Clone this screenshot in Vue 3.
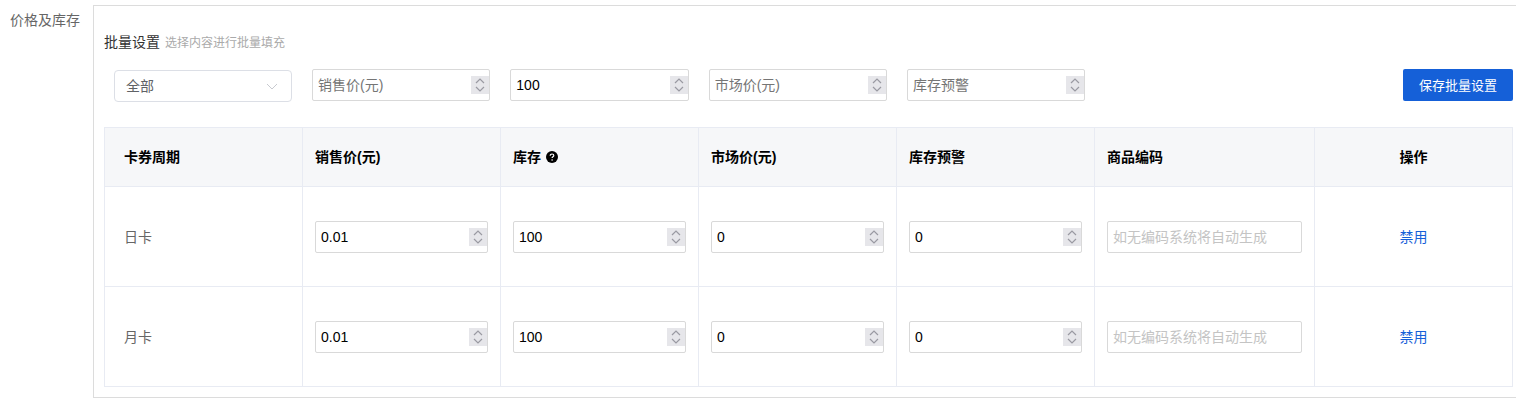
<script setup>
const batchFields = [
  { key: 'price', placeholder: '销售价(元)', value: '' },
  { key: 'stock', placeholder: '库存', value: '100' },
  { key: 'market', placeholder: '市场价(元)', value: '' },
  { key: 'warn', placeholder: '库存预警', value: '' }
]

const rows = [
  { name: '日卡', cells: ['0.01', '100', '0', '0'] },
  { name: '月卡', cells: ['0.01', '100', '0', '0'] }
]
</script>

<template>
  <div class="page">
    <div class="side-label">价格及库存</div>
    <div class="panel">
      <div class="batch-title">
        <span class="batch-name">批量设置</span>
        <span class="batch-tip">选择内容进行批量填充</span>
      </div>

      <div class="batch-bar">
        <div class="select">
          <span>全部</span>
          <svg class="arrow" width="12" height="7" viewBox="0 0 12 7">
            <path d="M1 1l5 5 5-5" fill="none" stroke="#c8cad0" stroke-width="1" />
          </svg>
        </div>
        <div v-for="f in batchFields" :key="f.key" class="num-wrap batch-num">
          <input class="num" type="number" :placeholder="f.placeholder" :value="f.value" />
          <span class="spin">
            <svg width="10" height="14" viewBox="0 0 10 14">
              <path d="M1 5l4-4 4 4M1 9l4 4 4-4" fill="none" stroke="#9a9aa2" stroke-width="1.2" />
            </svg>
          </span>
        </div>
        <button class="save-btn" type="button">保存批量设置</button>
      </div>

      <table class="sku-table">
        <colgroup>
          <col class="c-std" />
          <col class="c-std" />
          <col class="c-std" />
          <col class="c-std" />
          <col class="c-std" />
          <col class="c-code" />
          <col />
        </colgroup>
        <thead>
          <tr>
            <th class="first">卡券周期</th>
            <th>销售价(元)</th>
            <th>
              <span class="th-help">
                库存
                <svg width="12" height="12" viewBox="0 0 12 12">
                  <circle cx="6" cy="6" r="6" fill="#000" />
                  <path d="M4.2 4.7c0-1.1.8-1.7 1.8-1.7s1.8.6 1.8 1.5c0 1.3-1.7 1.3-1.7 2.6" fill="none" stroke="#fff" stroke-width="1.2" />
                  <circle cx="6.1" cy="9" r=".8" fill="#fff" />
                </svg>
              </span>
            </th>
            <th>市场价(元)</th>
            <th>库存预警</th>
            <th>商品编码</th>
            <th class="center">操作</th>
          </tr>
        </thead>
        <tbody>
          <tr v-for="row in rows" :key="row.name">
            <td class="first name">{{ row.name }}</td>
            <td v-for="(val, i) in row.cells" :key="i">
              <div class="num-wrap">
                <input class="num" type="number" :value="val" />
                <span class="spin">
                  <svg width="10" height="14" viewBox="0 0 10 14">
                    <path d="M1 5l4-4 4 4M1 9l4 4 4-4" fill="none" stroke="#9a9aa2" stroke-width="1.2" />
                  </svg>
                </span>
              </div>
            </td>
            <td><input class="code" type="text" placeholder="如无编码系统将自动生成" /></td>
            <td class="center action"><a class="link">禁用</a></td>
          </tr>
        </tbody>
      </table>
    </div>
  </div>
</template>

<style scoped>
.page {
  display: flex;
  align-items: flex-start;
  padding-top: 5px;
  font-family: "Liberation Sans", "Noto Sans CJK SC", sans-serif;
  color: #333;
}

.side-label {
  width: 93px;
  flex: none;
  box-sizing: border-box;
  padding: 5px 0 0 10px;
  font-size: 14px;
  line-height: 20px;
  color: #666;
}

.panel {
  flex: 1;
  min-width: 0;
  box-sizing: border-box;
  height: 393px;
  padding: 26px 3px 0 10px;
  border: 1px solid #dcdcdc;
  border-right: none;
}

.batch-title {
  display: flex;
  align-items: baseline;
  height: 20px;
  line-height: 20px;
}

.batch-name {
  font-size: 14px;
  color: #333;
}

.batch-tip {
  margin-left: 5px;
  font-size: 12px;
  color: #aaa;
}

.batch-bar {
  display: flex;
  align-items: flex-start;
  margin-top: 17px;
  padding-left: 10px;
}

.select {
  display: flex;
  align-items: center;
  justify-content: space-between;
  box-sizing: border-box;
  width: 178px;
  height: 32px;
  margin-top: 1px;
  padding: 0 12px 2px 11px;
  border: 1px solid #dcdfe6;
  border-radius: 4px;
  font-size: 14px;
  color: #606266;
}

.arrow {
  margin-top: 2px;
  margin-right: 1px;
}

.num-wrap {
  position: relative;
  width: 173px;
  height: 32px;
}

.batch-num {
  width: 178.33px;
  margin-left: 20px;
}

.num {
  display: block;
  box-sizing: border-box;
  width: 100%;
  height: 32px;
  padding: 0 20px 0 5px;
  border: 1px solid #d9d9d9;
  border-radius: 2px;
  outline: none;
  background: #fff;
  font-family: inherit;
  font-size: 14px;
  color: #000;
  appearance: textfield;
}

.num::-webkit-inner-spin-button,
.num::-webkit-outer-spin-button {
  -webkit-appearance: none;
  margin: 0;
}

.num::placeholder {
  color: #757575;
}

/* 数字框右侧的步进按钮 */
.spin {
  position: absolute;
  top: 7px;
  right: 1px;
  display: flex;
  align-items: center;
  justify-content: center;
  width: 18px;
  height: 18px;
  background: #e6e6ea;
  pointer-events: none;
}

.save-btn {
  box-sizing: border-box;
  width: 110px;
  height: 32px;
  margin-left: auto;
  padding: 0 0 2px;
  border: none;
  border-radius: 2px;
  background: #1560d8;
  font-family: inherit;
  font-size: 13px;
  color: #fff;
}

.sku-table {
  width: 1409px;
  margin-top: 25px;
  border-collapse: collapse;
  table-layout: fixed;
}

.c-std {
  width: 198px;
}

.c-code {
  width: 220px;
}

.sku-table th,
.sku-table td {
  box-sizing: border-box;
  padding: 0 12px;
  border: 1px solid #e8ebf3;
  text-align: left;
  font-size: 14px;
}

.sku-table th {
  height: 59px;
  padding-bottom: 2px;
  background: #f6f7f9;
  font-weight: 700;
  color: #000;
}

.sku-table td {
  height: 100px;
}

.sku-table .first {
  padding-left: 19px;
}

.sku-table .center {
  text-align: center;
}

.sku-table .name,
.sku-table .action {
  padding-bottom: 2px;
}

.name {
  color: #666;
}

.th-help {
  display: inline-flex;
  align-items: center;
  gap: 5px;
}

.th-help svg {
  margin-top: 2px;
}

.code {
  box-sizing: border-box;
  width: 195px;
  height: 32px;
  padding: 0 5px;
  border: 1px solid #d9d9d9;
  border-radius: 2px;
  outline: none;
  font-family: inherit;
  font-size: 14px;
}

.code::placeholder {
  color: #c4c4c4;
}

.link {
  font-size: 14px;
  color: #1560d8;
  cursor: pointer;
}
</style>

<style>
html,
body {
  margin: 0;
  background: #fff;
}
</style>
